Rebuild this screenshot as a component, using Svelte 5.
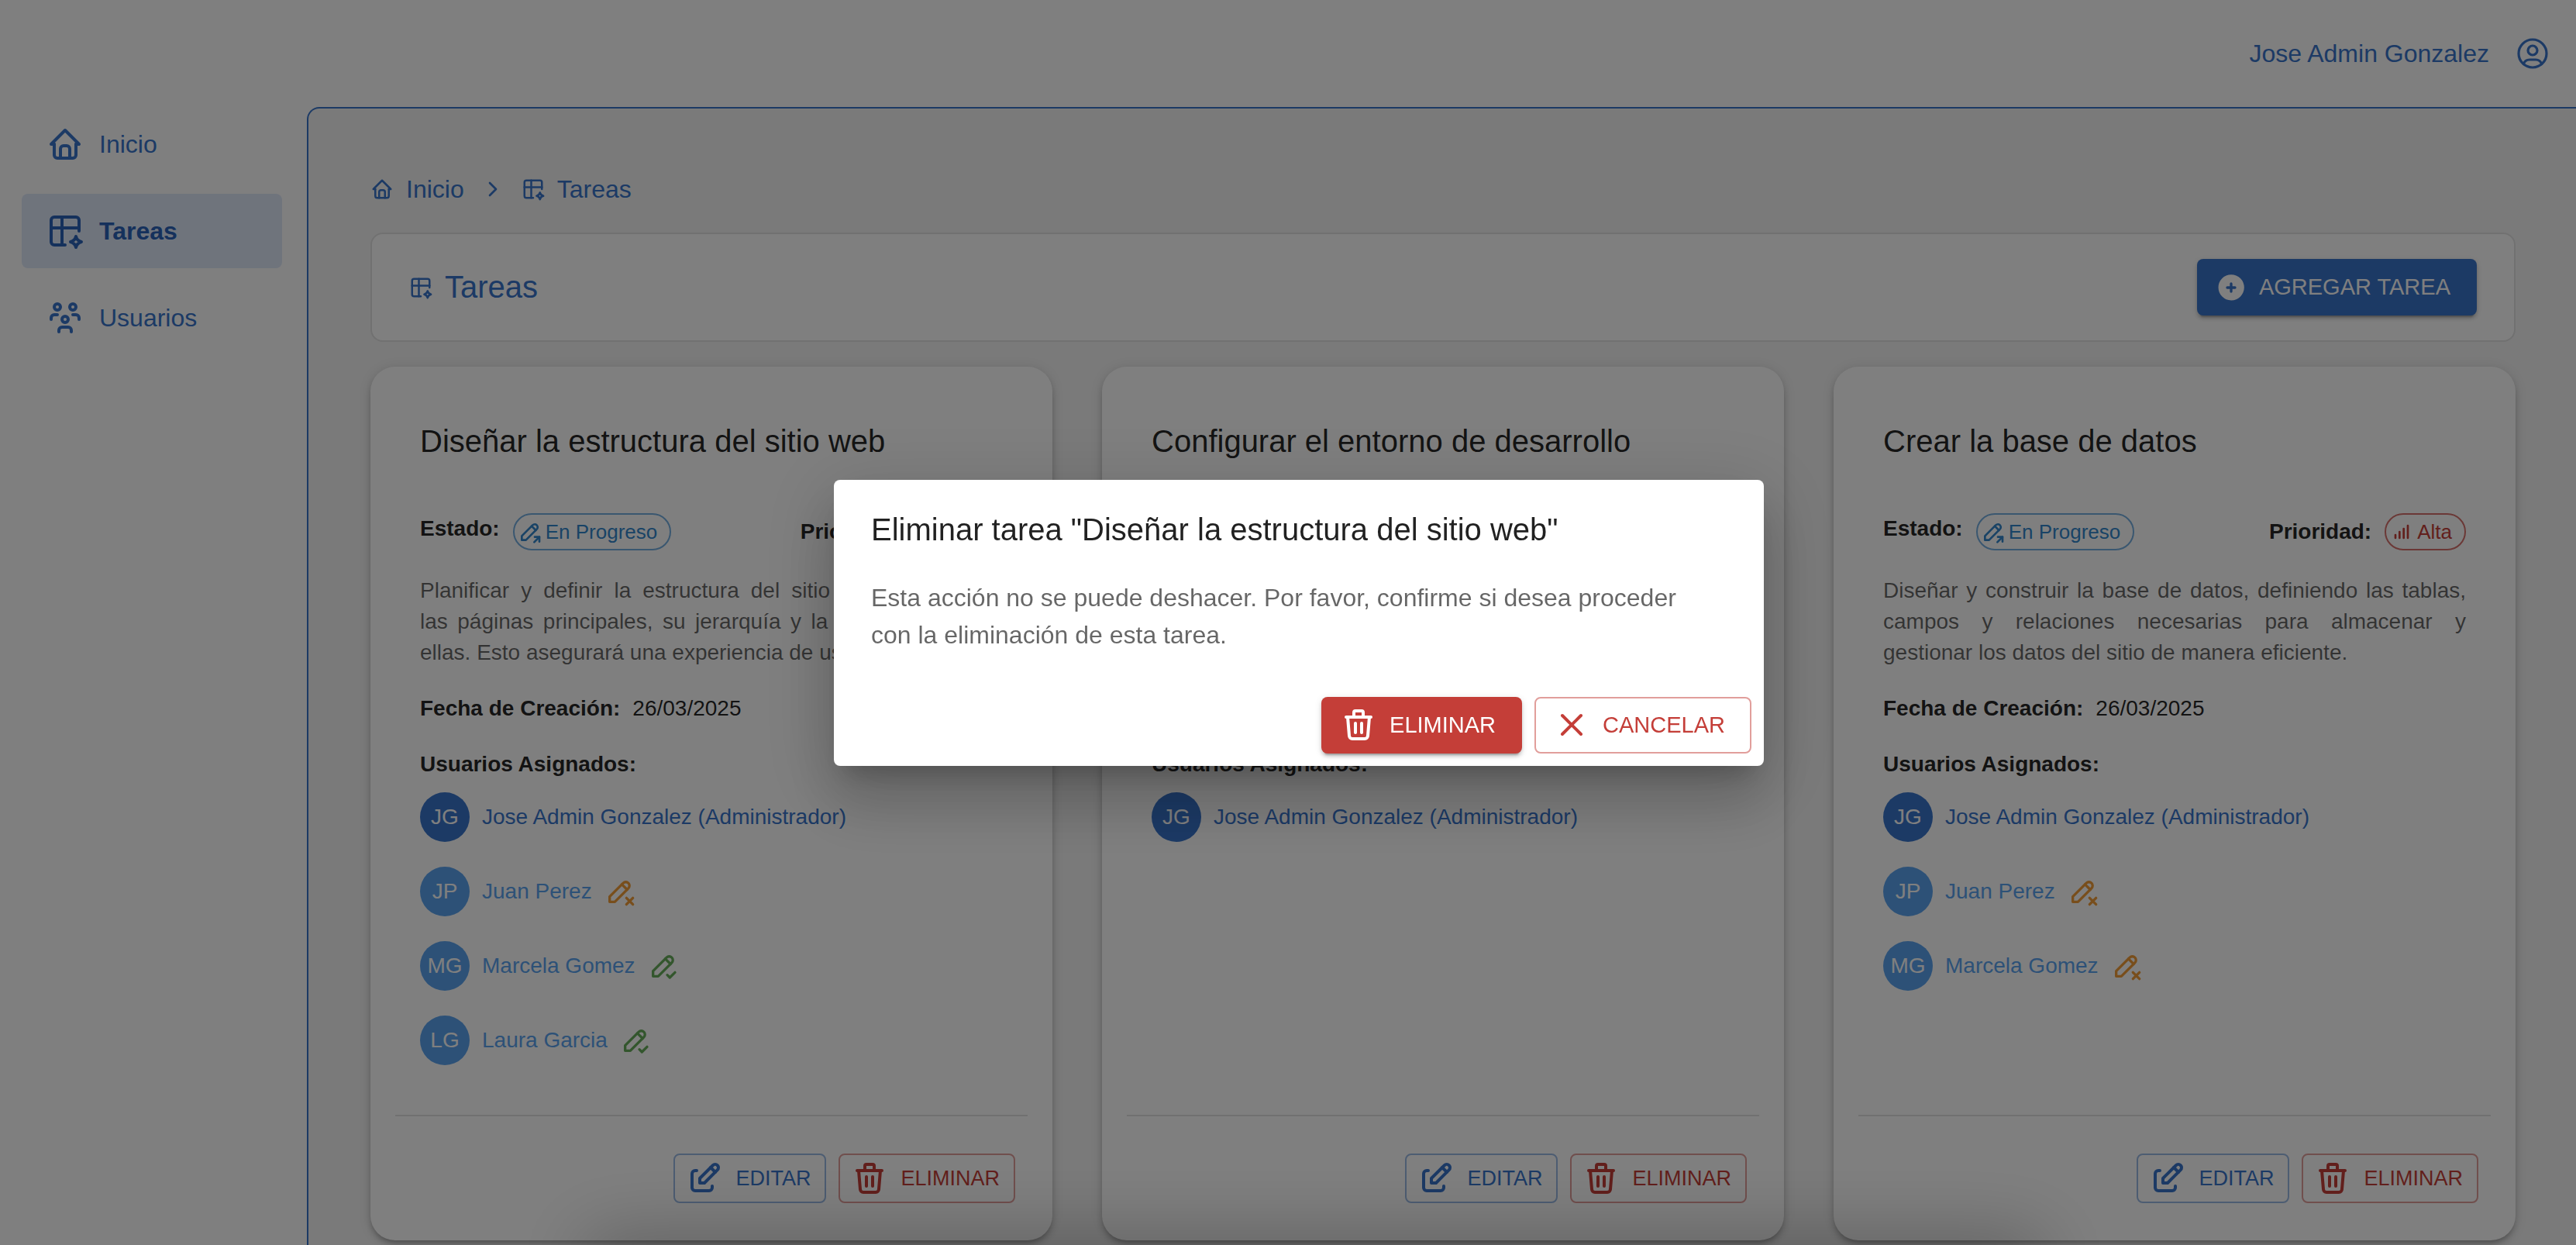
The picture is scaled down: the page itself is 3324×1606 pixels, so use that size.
<script>
  const icons = {
    home: ['M5 12H3l9-9 9 9h-2', 'M5 12v7a2 2 0 0 0 2 2h10a2 2 0 0 0 2-2v-7', 'M9 21v-6a2 2 0 0 1 2-2h2a2 2 0 0 1 2 2v6'],
    table: [
      'M12 21H5a2 2 0 0 1-2-2V5a2 2 0 0 1 2-2h14a2 2 0 0 1 2 2v7',
      'M3 10h18',
      'M10 3v18',
      'M19 22.5a4.75 4.75 0 0 1 3.5-3.5 4.75 4.75 0 0 1-3.5-3.5 4.75 4.75 0 0 1-3.5 3.5 4.75 4.75 0 0 1 3.5 3.5'
    ],
    users: [
      'M10 13a2 2 0 1 0 4 0 2 2 0 0 0-4 0',
      'M8 21v-1a2 2 0 0 1 2-2h4a2 2 0 0 1 2 2v1',
      'M15 5a2 2 0 1 0 4 0 2 2 0 0 0-4 0',
      'M17 10h2a2 2 0 0 1 2 2v1',
      'M5 5a2 2 0 1 0 4 0 2 2 0 0 0-4 0',
      'M3 13v-1a2 2 0 0 1 2-2h2'
    ],
    account: [
      'M3 12a9 9 0 1 0 18 0 9 9 0 1 0-18 0',
      'M9 10a3 3 0 1 0 6 0 3 3 0 1 0-6 0',
      'M6.168 18.849A4 4 0 0 1 10 16h4a4 4 0 0 1 3.834 2.855'
    ],
    chevron: ['M9 6l6 6-6 6'],
    progress: ['M4 20h4L18.5 9.5a2.828 2.828 0 1 0-4-4L4 16v4', 'M13.5 6.5l4 4', 'M16 22l5-5', 'M21 21.5V17h-4.5'],
    pending: ['M4 20h4L18.5 9.5a2.828 2.828 0 1 0-4-4L4 16v4', 'M13.5 6.5l4 4', 'M22 22l-5-5', 'M17 22l5-5'],
    done: ['M4 20h4L18.5 9.5a2.828 2.828 0 1 0-4-4L4 16v4', 'M13.5 6.5l4 4', 'M15 19l2 2 4-4'],
    bars: ['M6 18v-3', 'M10 18v-6', 'M14 18V9', 'M18 18V6'],
    edit: [
      'M7 7H6a2 2 0 0 0-2 2v9a2 2 0 0 0 2 2h9a2 2 0 0 0 2-2v-1',
      'M20.385 6.585a2.1 2.1 0 0 0-2.97-2.97L9 12v3h3l8.385-8.415z',
      'M16 5l3 3'
    ],
    trash: [
      'M4 7h16',
      'M10 11v6',
      'M14 11v6',
      'M5 7l1 12a2 2 0 0 0 2 2h8a2 2 0 0 0 2-2l1-12',
      'M9 7V4a1 1 0 0 1 1-1h4a1 1 0 0 1 1 1v3'
    ],
    close: ['M18 6L6 18', 'M6 6l12 12']
  };

  const nav = [
    { label: 'Inicio', icon: 'home' },
    { label: 'Tareas', icon: 'table', active: true },
    { label: 'Usuarios', icon: 'users' }
  ];

  const admin = { initials: 'JG', name: 'Jose Admin Gonzalez (Administrador)', admin: true };
  const juan = { initials: 'JP', name: 'Juan Perez', state: 'pending' };

  const tasks = [
    {
      title: 'Diseñar la estructura del sitio web',
      priority: 'Baja',
      lines: [
        'Planificar y definir la estructura del sitio web, incluyendo',
        'las páginas principales, su jerarquía y la redirección entre',
        'ellas. Esto asegurará una experiencia de uso intuitiva.'
      ],
      users: [
        admin,
        juan,
        { initials: 'MG', name: 'Marcela Gomez', state: 'done' },
        { initials: 'LG', name: 'Laura Garcia', state: 'done' }
      ]
    },
    {
      title: 'Configurar el entorno de desarrollo',
      priority: 'Alta',
      lines: [
        'Instalar y configurar las herramientas necesarias',
        'para el desarrollo del sitio, incluyendo el servidor',
        'local y las dependencias del proyecto.'
      ],
      users: [admin]
    },
    {
      title: 'Crear la base de datos',
      priority: 'Alta',
      lines: [
        'Diseñar y construir la base de datos, definiendo las tablas,',
        'campos y relaciones necesarias para almacenar y',
        'gestionar los datos del sitio de manera eficiente.'
      ],
      users: [admin, juan, { initials: 'MG', name: 'Marcela Gomez', state: 'pending' }]
    }
  ];

  let open = $state(true);
</script>

{#snippet icon(name, size)}
  <svg class="icon {size} {name}" viewBox="0 0 24 24" aria-hidden="true">
    {#each icons[name] as d}<path {d} />{/each}
  </svg>
{/snippet}

<div class="app">
  <header>
    <span>Jose Admin Gonzalez</span>
    <button class="account-button" aria-label="Cuenta">{@render icon('account', 'lg')}</button>
  </header>

  <div class="body">
    <nav class="sidebar">
      {#each nav as item}
        <a href="#{item.label.toLowerCase()}" class:active={item.active}>
          {@render icon(item.icon, 'lg')}
          <span>{item.label}</span>
        </a>
      {/each}
    </nav>

    <main>
      <nav class="crumbs" aria-label="Ruta">
        <a href="#inicio">{@render icon('home', 'xs')}Inicio</a>
        {@render icon('chevron', 'sm')}
        <a href="#tareas">{@render icon('table', 'xs')}Tareas</a>
      </nav>

      <section class="panel">
        <h1>{@render icon('table', 'xs')}Tareas</h1>
        <button class="btn large primary">
          <svg class="icon md solid" viewBox="0 0 24 24" aria-hidden="true">
            <path d="M4.929 4.929a10 10 0 1 1 14.141 14.141a10 10 0 0 1-14.14-14.14zm8.071 4.071a1 1 0 1 0-2 0v2h-2a1 1 0 1 0 0 2h2v2a1 1 0 1 0 2 0v-2h2a1 1 0 1 0 0-2h-2v-2z" />
          </svg>
          AGREGAR TAREA
        </button>
      </section>

      <div class="cards">
        {#each tasks as task}
          <article class="card">
            <div class="content">
              <h2>{task.title}</h2>
              <div class="meta">
                <div class="state">
                  <b>Estado:</b>
                  <span class="chip info">{@render icon('progress', 'sm')}En Progreso</span>
                </div>
                <div class="priority">
                  <b>Prioridad:</b>
                  <span class="chip danger">{@render icon('bars', 'sm')}{task.priority}</span>
                </div>
              </div>
              <p class="text">
                {#each task.lines as line}<span>{line}</span>{/each}
              </p>
              <p class="date"><b>Fecha de Creación:</b><span>26/03/2025</span></p>
              <h3>Usuarios Asignados:</h3>
              <ul>
                {#each task.users as user}
                  <li class:admin={user.admin}>
                    <span class="avatar">{user.initials}</span>
                    <span class="name">{user.name}</span>
                    {#if user.state}{@render icon(user.state, 'md')}{/if}
                  </li>
                {/each}
              </ul>
            </div>
            <footer>
              <button class="btn outline">{@render icon('edit', 'lg')}EDITAR</button>
              <button class="btn outline red" onclick={() => (open = true)}>{@render icon('trash', 'lg')}ELIMINAR</button>
            </footer>
          </article>
        {/each}
      </div>
    </main>
  </div>
</div>

{#if open}
  <div class="backdrop">
    <div class="dialog" role="dialog" aria-modal="true" aria-labelledby="dialog-title">
      <h2 id="dialog-title">Eliminar tarea "Diseñar la estructura del sitio web"</h2>
      <p>Esta acción no se puede deshacer. Por favor, confirme si desea proceder con la eliminación de esta tarea.</p>
      <div class="actions">
        <button class="btn large error" onclick={() => (open = false)}>{@render icon('trash', 'lg')}ELIMINAR</button>
        <button class="btn large outline red" onclick={() => (open = false)}>{@render icon('close', 'lg')}CANCELAR</button>
      </div>
    </div>
    <div class="edge"></div>
  </div>
{/if}

<style>
  :global(body) {
    margin: 0;
    overflow: hidden;
    background: #fff;
    font-family: 'Liberation Sans', Arial, Helvetica, sans-serif;
    color: rgba(0, 0, 0, 0.87);
  }
  h1, h2, h3, p, ul {
    margin: 0;
    padding: 0;
    font-weight: 400;
  }
  b { font-weight: 700; }
  a {
    color: inherit;
    text-decoration: none;
  }
  button {
    font: inherit;
    cursor: pointer;
  }
  .icon {
    flex: none;
    display: block;
    fill: none;
    stroke: currentColor;
    stroke-width: 2;
    stroke-linecap: round;
    stroke-linejoin: round;
  }
  .xs { width: 30px; height: 30px; }
  .sm { width: 32px; height: 32px; }
  .md { width: 40px; height: 40px; }
  .lg { width: 48px; height: 48px; }
  .solid { fill: currentColor; stroke: none; }
  .account { stroke-width: 1.6; }

  .app {
    display: flex;
    flex-direction: column;
    height: 100vh;
  }
  header {
    flex: none;
    box-sizing: border-box;
    height: 138px;
    padding: 0 32px;
    display: flex;
    align-items: center;
    justify-content: flex-end;
    gap: 32px;
    font-size: 32px;
    color: #3874cb;
  }
  .account-button {
    padding: 0;
    border: 0;
    background: none;
    color: inherit;
  }
  .body {
    flex: 1;
    min-height: 0;
    display: flex;
  }
  .sidebar {
    flex: none;
    box-sizing: border-box;
    width: 396px;
    padding: 0 32px 0 28px;
    display: flex;
    flex-direction: column;
    gap: 16px;
    font-size: 32px;
    color: #3874cb;
  }
  .sidebar a {
    display: flex;
    align-items: center;
    gap: 20px;
    height: 96px;
    padding: 0 32px;
    border-radius: 8px;
  }
  .sidebar .active {
    background: #dfe8f9;
    color: #2b63b9;
    font-weight: 700;
  }
  main {
    flex: 1;
    min-width: 0;
    overflow: hidden;
    padding: 80px 78px 6px 80px;
    border: solid #3874cb;
    border-width: 2px 0 0 2px;
    border-top-left-radius: 16px;
    background: #f4f4f4;
  }
  .crumbs {
    display: flex;
    align-items: center;
    gap: 21px;
    height: 48px;
    margin-bottom: 32px;
    font-size: 32px;
    color: #3874cb;
  }
  .crumbs a {
    display: flex;
    align-items: center;
    gap: 16px;
  }
  .panel {
    display: flex;
    align-items: center;
    justify-content: space-between;
    padding: 32px 48px;
    margin-bottom: 32px;
    border: 2px solid #e2e2e2;
    border-radius: 16px;
    background: #fff;
  }
  h1 {
    display: flex;
    align-items: center;
    gap: 16px;
    font-size: 40px;
    color: #3874cb;
  }
  .btn {
    box-sizing: border-box;
    display: flex;
    align-items: center;
    gap: 16px;
    height: 64px;
    padding: 0 18px 0 14px;
    border: 0;
    border-radius: 8px;
    background: none;
    font-size: 27px;
    color: #3874cb;
  }
  .large {
    height: 73px;
    padding: 0 34px 0 24px;
    font-size: 29px;
  }
  .outline { border: 2px solid #9bbae5; }
  .outline.large { padding: 0 32px 0 22px; }
  .red {
    border-color: #e19e9b;
    color: #c43e38;
  }
  .primary, .error {
    color: #fff;
    box-shadow: 0 6px 2px -4px rgba(0, 0, 0, 0.2), 0 4px 4px rgba(0, 0, 0, 0.14), 0 2px 10px rgba(0, 0, 0, 0.12);
  }
  .primary { background: #3874cb; }
  .error { background: #c43e38; }

  .cards {
    display: grid;
    grid-template-columns: repeat(3, 1fr);
    gap: 64px;
  }
  .card {
    display: flex;
    flex-direction: column;
    justify-content: space-between;
    border-radius: 32px;
    background: #fff;
    box-shadow: 0 6px 6px -4px rgba(0, 0, 0, 0.2), 0 6px 8px rgba(0, 0, 0, 0.14), 0 2px 16px rgba(0, 0, 0, 0.12);
  }
  .content {
    padding: 64px;
    font-size: 28px;
    line-height: 40px;
  }
  .card h2 {
    margin-bottom: 61px;
    font-size: 40px;
    line-height: 64px;
  }
  .meta {
    display: flex;
    justify-content: space-between;
    margin-bottom: 32px;
  }
  .state, .priority {
    display: flex;
    gap: 17px;
  }
  .priority { align-items: center; }
  .chip {
    box-sizing: border-box;
    display: flex;
    align-items: center;
    gap: 4px;
    height: 48px;
    padding: 0 16px 0 4px;
    border: 2px solid;
    border-radius: 24px;
    font-size: 26px;
  }
  .info { color: #3387cc; border-color: #74aee0; }
  .danger { color: #c43e38; border-color: #d6716c; }
  .text {
    margin-bottom: 32px;
    color: rgba(0, 0, 0, 0.6);
  }
  .text span {
    display: block;
    text-align: justify;
    text-align-last: justify;
  }
  .text span:last-child { text-align-last: left; }
  .date {
    display: flex;
    gap: 16px;
    margin-bottom: 32px;
  }
  h3 {
    margin-bottom: 16px;
    font-size: 28px;
    font-weight: 700;
  }
  ul {
    display: flex;
    flex-direction: column;
    gap: 32px;
    list-style: none;
  }
  li {
    display: flex;
    align-items: center;
    gap: 16px;
    color: #5aa3ef;
  }
  .admin { color: #3874cb; }
  .avatar {
    flex: none;
    width: 64px;
    height: 64px;
    border-radius: 50%;
    background: #5aa3ef;
    color: #fff;
    line-height: 64px;
    text-align: center;
  }
  .admin .avatar { background: #3874cb; }
  .pending { color: #f19d38; }
  .done { color: #67ad5b; }
  footer {
    display: flex;
    justify-content: flex-end;
    gap: 16px;
    margin: 0 32px;
    padding: 48px 16px;
    border-top: 2px solid #e0e0e0;
  }

  .backdrop {
    position: fixed;
    inset: 0;
    overflow: hidden;
    display: flex;
    align-items: center;
    justify-content: center;
    padding-left: 28px;
    background: rgba(0, 0, 0, 0.5);
  }
  .dialog {
    width: 1200px;
    max-width: calc(100% - 128px);
    border-radius: 8px;
    background: #fff;
    box-shadow: 0 22px 30px -14px rgba(0, 0, 0, 0.2), 0 48px 76px 6px rgba(0, 0, 0, 0.14), 0 18px 92px 16px rgba(0, 0, 0, 0.12);
  }
  .dialog h2 {
    padding: 32px 48px;
    font-size: 40px;
    line-height: 64px;
  }
  .dialog p {
    padding: 0 80px 40px 48px;
    font-size: 32px;
    line-height: 48px;
    color: rgba(0, 0, 0, 0.6);
  }
  .actions {
    display: flex;
    justify-content: flex-end;
    gap: 16px;
    padding: 16px;
  }
  /* Soft shade rising from the bottom edge of the window */
  .edge {
    position: absolute;
    left: 23%;
    right: 21%;
    top: 100%;
    height: 64px;
    box-shadow: 0 0 96px 8px rgba(0, 0, 0, 0.28);
  }
</style>
